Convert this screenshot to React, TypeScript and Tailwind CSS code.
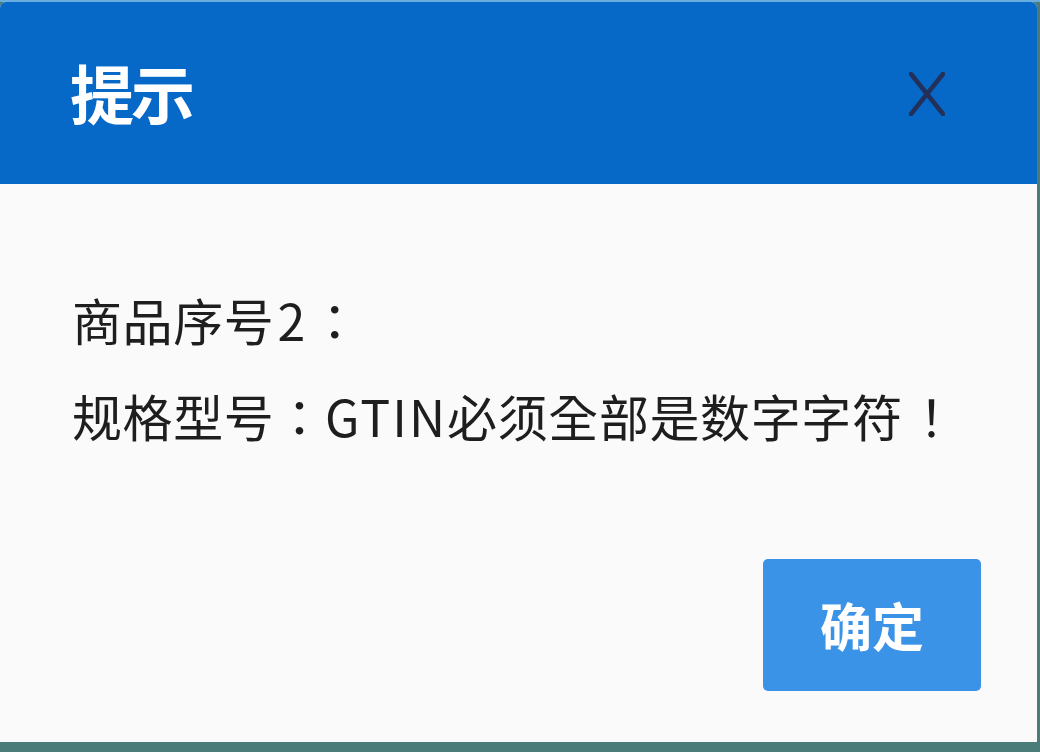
export default function App() {
  return (
    <div className="h-[752px] w-[1040px] overflow-hidden bg-[#4b7c7a] flex flex-col" style={{ fontFamily: '"Noto Sans CJK SC", "Noto Sans", sans-serif' }}>
      <div className="h-[2px] bg-[#6aaee0]"></div>
      <div className="w-[1037px] h-[740px] flex flex-col rounded-t-[6px] overflow-hidden bg-[#fafafa]">
        <div className="h-[182px] bg-[#0669c8] flex items-center justify-between pl-[70px] pr-[92px]">
          <span className="text-white font-bold text-[64px] leading-none tracking-[-3px] -mt-[4px]">提示</span>
          <svg width="36" height="44" viewBox="0 0 36 44" className="mt-[2px]">
            <path d="M2 2 L34 42 M34 2 L2 42" stroke="#22305a" strokeWidth="4.5" strokeLinecap="round" />
          </svg>
        </div>
        <div className="flex-1 flex flex-col px-[72px] pt-[86px] text-[#1e1e1e] text-[50px] leading-[98px] tracking-[0.6px]" style={{ fontFamily: '"Noto Sans CJK TC", "Noto Sans", sans-serif' }}>
          <p>商品序号<span className="ml-[3px]">2</span><span className="ml-[4px]">：</span></p>
          <p className="-mt-[2px]">规格型号：<span className="tracking-[2px]">GTIN</span>必须全部是数字字符<span className="ml-[4px]">！</span></p>
          <div className="mt-auto mb-[51px] -mr-[16px] flex justify-end">
            <button className="w-[218px] h-[132px] rounded-[5px] bg-[#3a93e6] text-white font-bold text-[52px] leading-none tracking-normal" style={{ fontFamily: '"Noto Sans CJK SC", sans-serif' }}>确定</button>
          </div>
        </div>
      </div>
    </div>
  )
}
